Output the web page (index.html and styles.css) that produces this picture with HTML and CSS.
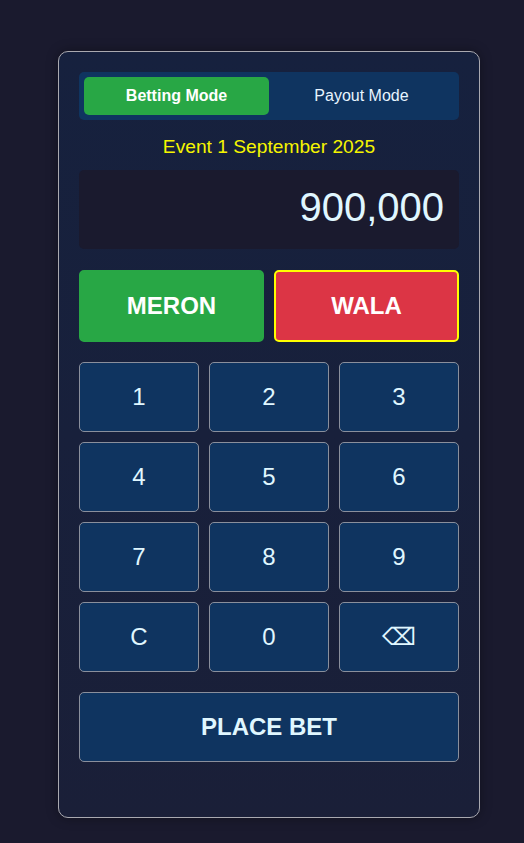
FILE: index.html
```html
<!DOCTYPE html>
<html>
<head>
<meta charset="utf-8">
<link rel="stylesheet" href="styles.css">
</head>
<body>
<div class="card">
  <div class="toggle">
    <button class="mode active">Betting Mode</button>
    <button class="mode">Payout Mode</button>
  </div>
  <div class="event">Event 1 September 2025</div>
  <div class="display">900,000</div>
  <div class="sides">
    <button class="side meron">MERON</button>
    <button class="side wala">WALA</button>
  </div>
  <div class="keypad">
    <button class="key">1</button>
    <button class="key">2</button>
    <button class="key">3</button>
    <button class="key">4</button>
    <button class="key">5</button>
    <button class="key">6</button>
    <button class="key">7</button>
    <button class="key">8</button>
    <button class="key">9</button>
    <button class="key">C</button>
    <button class="key">0</button>
    <button class="key">⌫</button>
  </div>
  <button class="place">PLACE BET</button>
</div>
</body>
</html>
```

FILE: styles.css
```css
html, body {
  margin: 0;
  padding: 0;
  background: #1a1a2e;
  font-family: "Liberation Sans", Arial, sans-serif;
}
body {
  padding-top: 51px;
  height: 843px;
  box-sizing: border-box;
}
.card {
  margin-left: 58px;
  width: 422px;
  height: 767px;
  box-sizing: border-box;
  border: 1px solid #a9a9b0;
  border-radius: 10px;
  background: linear-gradient(#16213e, #1a1f38);
  padding: 20px;
  box-shadow: 0 0 12px rgba(0,0,0,0.35);
}
button {
  font-family: "Liberation Sans", Arial, sans-serif;
  cursor: pointer;
}
.toggle {
  display: flex;
  background: #0f3460;
  border-radius: 5px;
  padding: 5px;
  height: 48px;
  box-sizing: border-box;
}
.mode {
  flex: 1;
  border: none;
  background: transparent;
  color: #e8f4ff;
  font-size: 16px;
  border-radius: 5px;
  padding: 0;
}
.mode.active {
  background: #28a745;
  color: #fff;
  font-weight: bold;
}
.event {
  text-align: center;
  color: #f5f500;
  font-size: 19.2px;
  margin-top: 17px;
  line-height: 20px;
}
.display {
  margin-top: 13px;
  height: 79px;
  background: #1a1a2e;
  border-radius: 5px;
  color: #e0f7ff;
  font-size: 40px;
  text-align: right;
  padding-right: 15px;
  line-height: 74px;
}
.sides {
  display: flex;
  gap: 10px;
  margin-top: 21px;
}
.side {
  flex: 1;
  height: 72px;
  border-radius: 5px;
  border: 2px solid transparent;
  color: #fff;
  font-size: 24px;
  font-weight: bold;
}
.meron { background: #28a745; border-color: #28a745; }
.wala { background: #dc3545; border-color: #ffff00; }
.keypad {
  margin-top: 20px;
  display: grid;
  grid-template-columns: repeat(3, 1fr);
  grid-auto-rows: 70px;
  gap: 10px;
}
.key, .place {
  background: #0f3460;
  border: 1px solid #8a8f9c;
  border-radius: 5px;
  color: #e0f7ff;
  font-size: 24px;
}
.place {
  display: block;
  width: 100%;
  height: 70px;
  margin-top: 20px;
  font-weight: bold;
}
```
